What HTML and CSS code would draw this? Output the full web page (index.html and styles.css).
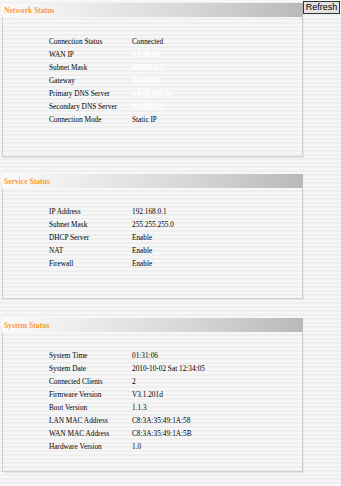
FILE: index.html
```html
<!DOCTYPE html>
<html lang="en">
<head>
    <meta charset="UTF-8">
    <title>Status</title>
    <link rel="stylesheet" href="styles.css">
</head>
<body>
    <div class="page">
        <div class="main">
            <div class="panel panel-network">
                <div class="panel-title">Network Status</div>
                <table class="info">
                    <tr><td>Connection Status</td><td>Connected</td></tr>
                    <tr><td>WAN IP</td><td class="masked">0.0.00.00</td></tr>
                    <tr><td>Subnet Mask</td><td class="masked">000.00.0.0</td></tr>
                    <tr><td>Gateway</td><td class="masked">0.0.00.01</td></tr>
                    <tr><td>Primary DNS Server</td><td class="masked">0.0.00.000.00</td></tr>
                    <tr><td>Secondary DNS Server</td><td class="masked">0.0.000.02</td></tr>
                    <tr><td>Connection Mode</td><td>Static IP</td></tr>
                </table>
            </div>

            <div class="panel panel-service">
                <div class="panel-title">Service Status</div>
                <table class="info">
                    <tr><td>IP Address</td><td>192.168.0.1</td></tr>
                    <tr><td>Subnet Mask</td><td>255.255.255.0</td></tr>
                    <tr><td>DHCP Server</td><td>Enable</td></tr>
                    <tr><td>NAT</td><td>Enable</td></tr>
                    <tr><td>Firewall</td><td>Enable</td></tr>
                </table>
            </div>

            <div class="panel panel-system">
                <div class="panel-title">System Status</div>
                <table class="info">
                    <tr><td>System Time</td><td>01:31:06</td></tr>
                    <tr><td>System Date</td><td>2010-10-02 Sat 12:34:05</td></tr>
                    <tr><td>Connected Clients</td><td>2</td></tr>
                    <tr><td>Firmware Version</td><td>V3.1.201d</td></tr>
                    <tr><td>Boot Version</td><td>1.1.3</td></tr>
                    <tr><td>LAN MAC Address</td><td>C8:3A:35:49:1A:58</td></tr>
                    <tr><td>WAN MAC Address</td><td>C8:3A:35:49:1A:5B</td></tr>
                    <tr><td>Hardware Version</td><td>1.0</td></tr>
                </table>
            </div>
        </div>
        <div class="side">
            <button class="refresh">Refresh</button>
        </div>
    </div>
</body>
</html>
```

FILE: styles.css
```css
html, body {
    height: 100%;
}

body {
    margin: 0;
    padding: 3px 0 0 2px;
    box-sizing: border-box;
    font-family: 'Liberation Serif', serif;
    color: #000;
    background: repeating-linear-gradient(to bottom, #f7f7f7 0, #f7f7f7 2px, #efefef 2px, #efefef 4px);
}

.page {
    display: grid;
    grid-template-columns: 301px auto;
}

.panel {
    margin-bottom: 17px;
}

.panel-service {
    margin-bottom: 19px;
}

.panel-title {
    height: 14px;
    line-height: 15px;
    padding-left: 2px;
    font-size: 7.6px;
    font-weight: bold;
    color: #ff9933;
    background: linear-gradient(to right, #fbfbfb, #d8d8d8 60%, #b9b9b9);
}

.info {
    border-collapse: collapse;
    width: 100%;
    border: 1px solid #cfcfcf;
    border-top: none;
    box-shadow: 1px 1px 0 #e6e6e6;
}

.info td {
    font-size: 7.3px;
    height: 13px;
    padding: 0;
    white-space: nowrap;
}

.info td:first-child {
    padding-left: 46px;
    width: 83px;
}

.info tr:first-child td {
    padding-top: 18px;
}

.info tr:last-child td {
    padding-bottom: 30px;
}

.panel-service .info tr:first-child td {
    padding-top: 17px;
}

.panel-service .info tr:last-child td {
    padding-bottom: 28px;
}

.panel-system .info tr:first-child td {
    padding-top: 17px;
}

.panel-system .info tr:last-child td {
    padding-bottom: 18px;
}

.masked {
    color: #fff;
    text-shadow: 0 0 1px #fff, 0 0 1px #fff;
}

.side {
    margin-top: -2px;
}

.refresh {
    display: block;
    font-family: 'Liberation Sans', Arial, sans-serif;
    font-size: 9px;
    line-height: 11px;
    padding: 0;
    width: 37px;
    height: 13px;
    text-align: center;
    border: 1px solid #333;
    background: #e2e2e2;
    color: #000;
}
```
